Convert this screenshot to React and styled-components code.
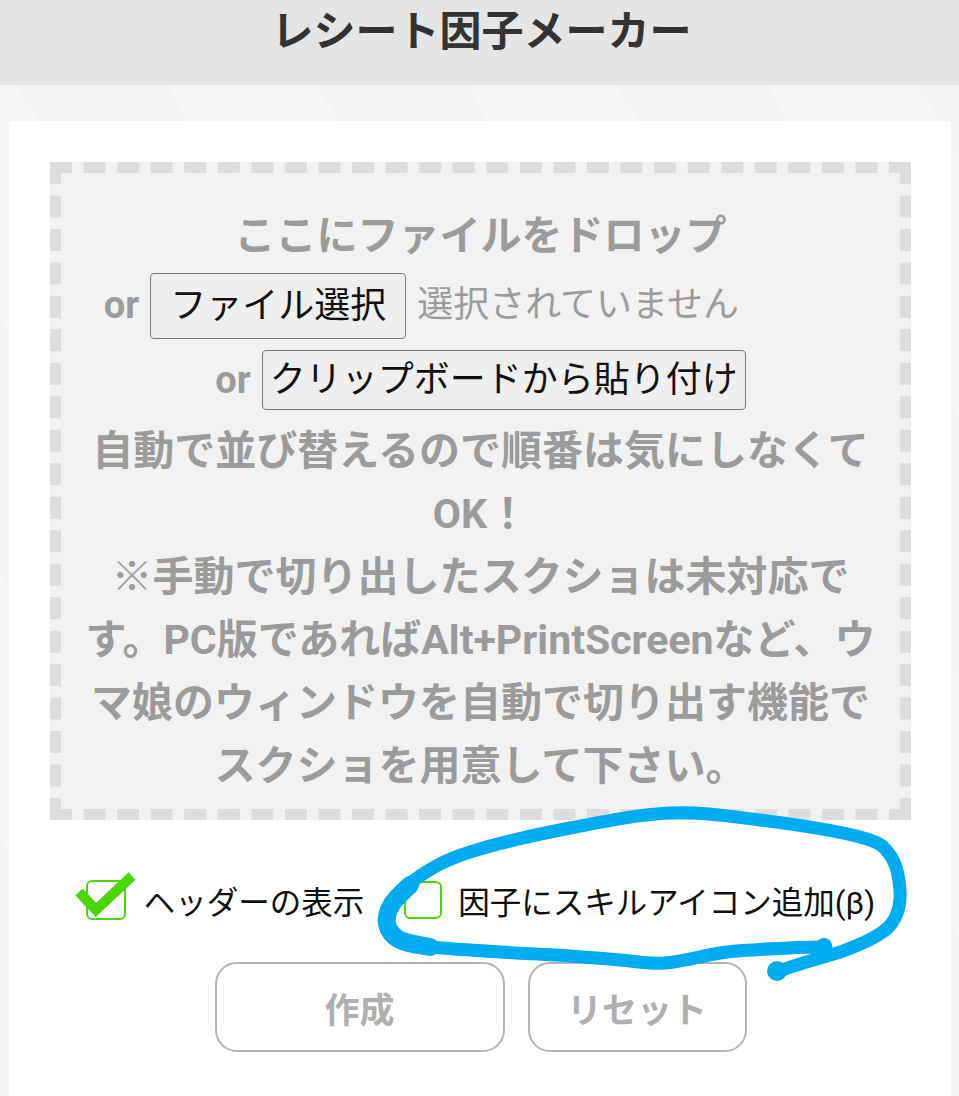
import styled, { createGlobalStyle } from "styled-components";

const Global = createGlobalStyle`
  html, body { margin: 0; padding: 0; }
  body {
    font-family: Roboto, "Noto Sans CJK JP", sans-serif;
    background: #f4f4f4;
  }
`;

const Page = styled.div`
  position: relative;
  width: 959px;
  height: 1096px;
  overflow: hidden;
  background-color: #f4f4f4;
  background-image: repeating-linear-gradient(
    60deg,
    #f3f3f3 0 130px,
    #f6f6f6 130px 260px
  );
`;

const Header = styled.header`
  height: 85px;
  background: #e5e5e5;
  display: flex;
  justify-content: center;
  align-items: flex-start;
`;

const Title = styled.h1`
  margin: 0;
  padding-left: 4px;
  font-size: 42px;
  line-height: 64px;
  font-weight: 700;
  color: #333;
`;

const Main = styled.main`
  padding: 36px 8px 0 9px;
`;

const Card = styled.section`
  background: #fff;
  height: 1000px;
  padding: 41px 40px 0 41px;
  display: flex;
  flex-direction: column;
`;

const DropZone = styled.div`
  border: 11px dashed #dddddd;
  background: #f2f2f2;
  padding: 32px 14px 11px;
  color: #9b9b9b;
  font-weight: 700;
  font-size: 41px;
  line-height: 63px;
  text-align: center;
`;

const Line = styled.div`
  margin-top: ${(p) => p.$mt || 0}px;
`;

const PickRow = styled.div`
  height: ${(p) => p.$h}px;
  display: flex;
  align-items: center;
  justify-content: center;
  gap: ${(p) => p.$gap}px;
`;

const Or = styled.span`
  font-size: 38px;
  font-weight: 700;
  color: #9b9b9b;
`;

const NativeButton = styled.button`
  font-family: inherit;
  font-weight: 400;
  font-size: 36px;
  line-height: 1;
  color: #111;
  background: #efefef;
  border: 1.5px solid #7a7a7a;
  border-radius: 4px;
  height: ${(p) => p.$h}px;
  padding: 0 ${(p) => p.$px}px;
`;

const Status = styled.span`
  width: 440px;
  text-align: left;
  font-size: 36px;
  font-weight: 400;
  color: #9b9b9b;
`;

const Options = styled.div`
  margin-top: 60px;
  display: flex;
  justify-content: center;
  gap: 40px;
`;

const Option = styled.label`
  display: flex;
  align-items: center;
  gap: ${(p) => p.$gap}px;
  font-size: 31.5px;
  color: #111;
  height: 40px;
`;

const Box = styled.span`
  position: relative;
  width: ${(p) => p.$size}px;
  height: ${(p) => p.$size}px;
  box-sizing: border-box;
  border: 2.5px solid #4bd60c;
  border-radius: 6px;
  background: #fff;
`;

const Tick = styled.svg`
  position: absolute;
  left: -14.5px;
  top: -14.5px;
  overflow: visible;
`;

const Actions = styled.div`
  margin-top: 42px;
  display: flex;
  justify-content: center;
  gap: 23px;
`;

const ActionButton = styled.button`
  width: ${(p) => p.$w}px;
  height: 90px;
  font-family: inherit;
  font-size: 35px;
  font-weight: 700;
  color: #b0b0b0;
  background: #fff;
  border: 2px solid #b4b4b4;
  border-radius: 22px;
`;

const Scribble = styled.svg`
  position: absolute;
  left: 0;
  top: 0;
  pointer-events: none;
`;

const Check = ({ checked, size, gap, children }) => (
  <Option $gap={gap}>
    <Box $size={size}>
      {checked && (
        <Tick width="70" height="60" viewBox="-12 -12 70 60">
          <polyline
            points="-6,12 11,30 47,-4"
            fill="none"
            stroke="#4bd60c"
            strokeWidth="10"
            strokeLinejoin="miter"
          />
        </Tick>
      )}
    </Box>
    {children}
  </Option>
);

// catmull-rom -> cubic bezier
const smooth = (pts) => {
  let d = `M${pts[0][0]},${pts[0][1]}`;
  for (let i = 0; i < pts.length - 1; i++) {
    const p0 = pts[i - 1] || pts[i];
    const p1 = pts[i];
    const p2 = pts[i + 1];
    const p3 = pts[i + 2] || p2;
    const c1 = [p1[0] + (p2[0] - p0[0]) / 6, p1[1] + (p2[1] - p0[1]) / 6];
    const c2 = [p2[0] - (p3[0] - p1[0]) / 6, p2[1] - (p3[1] - p1[1]) / 6];
    d += ` C${c1[0]},${c1[1]} ${c2[0]},${c2[1]} ${p2[0]},${p2[1]}`;
  }
  return d;
};

const loop = [
  [826, 947], [790, 948], [727, 952], [665, 963], [620, 960], [570, 956],
  [470, 950], [403, 943], [387, 926], [393, 903], [420, 876], [470, 852],
  [570, 828], [670, 813], [760, 820], [860, 837], [890, 855], [900, 890],
  [895, 918], [878, 935], [843, 951], [803, 963], [776, 972],
];

const leftBend = [[430, 947], [400, 940], [387, 924], [392, 904], [410, 885]];

export default function App() {
  return (
    <Page>
      <Global />
      <Header>
        <Title>レシート因子メーカー</Title>
      </Header>
      <Main>
        <Card>
          <DropZone>
            <Line>ここにファイルをドロップ</Line>
            <PickRow $h={75} $gap={11}>
              <Or>or</Or>
              <NativeButton $h={66} $px={19}>ファイル選択</NativeButton>
              <Status>選択されていません</Status>
            </PickRow>
            <PickRow $h={74} $gap={11}>
              <Or>or</Or>
              <NativeButton $h={60} $px={7}>クリップボードから貼り付け</NativeButton>
            </PickRow>
            <Line $mt={3}>自動で並び替えるので順番は気にしなくてOK！</Line>
            <Line>
              ※手動で切り出したスクショは未対応です。PC版であればAlt+PrintScreenなど、ウマ娘のウィンドウを自動で切り出す機能でスクショを用意して下さい。
            </Line>
          </DropZone>
          <Options>
            <Check checked size={40} gap={18}>ヘッダーの表示</Check>
            <Check size={38} gap={16}>因子にスキルアイコン追加(β)</Check>
          </Options>
          <Actions>
            <ActionButton $w={290}>作成</ActionButton>
            <ActionButton $w={219}>リセット</ActionButton>
          </Actions>
        </Card>
      </Main>
      <Scribble width="959" height="1096" viewBox="0 0 959 1096">
        <path d={smooth(loop)} fill="none" stroke="#00acf0" strokeWidth="13" strokeLinecap="round" strokeLinejoin="round" />
        <path d={smooth(leftBend)} fill="none" stroke="#00acf0" strokeWidth="18" strokeLinecap="round" />
        <circle cx="777" cy="971" r="10" fill="#00acf0" />
        <circle cx="824" cy="946" r="8" fill="#00acf0" />
      </Scribble>
    </Page>
  );
}
